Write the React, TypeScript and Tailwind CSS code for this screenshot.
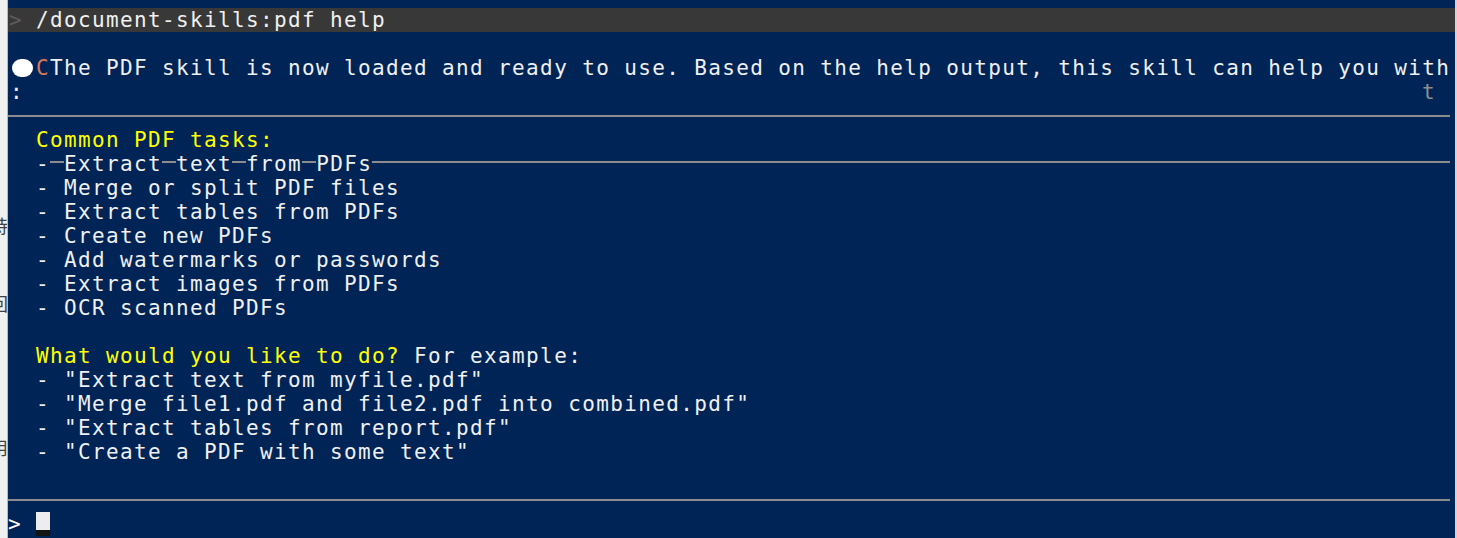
const mono = "font-['DejaVu_Sans_Mono','Liberation_Mono',monospace] text-[21px] tracking-[1.36px]";

const tasks = [
  'Merge or split PDF files',
  'Extract tables from PDFs',
  'Create new PDFs',
  'Add watermarks or passwords',
  'Extract images from PDFs',
  'OCR scanned PDFs',
];

const examples = [
  '"Extract text from myfile.pdf"',
  '"Merge file1.pdf and file2.pdf into combined.pdf"',
  '"Extract tables from report.pdf"',
  '"Create a PDF with some text"',
];

const Row = ({ children, className = '' }: { children?: React.ReactNode; className?: string }) => (
  <div className={`flex h-[24px] items-center whitespace-pre leading-[24px] ${className}`}>{children}</div>
);

const Rule = () => (
  <div className="flex h-[24px] items-center">
    <div className="h-[2px] w-[1442px] bg-[#8c8c8c]" />
  </div>
);

export default function App() {
  return (
    <div className="flex h-[538px] w-[1457px] overflow-hidden bg-[#f0f0f0]">
      {/* window behind, mostly covered */}
      <div className="w-[7px] overflow-hidden">
        <div className="-ml-[10px] flex w-[18px] flex-col font-['Noto_Sans_CJK_SC',sans-serif] text-[18px] leading-[22px] text-[#404040]">
          <span className="mt-[214px]">持</span>
          <span className="mt-[56px]">回</span>
          <span className="mt-[122px]">用</span>
        </div>
      </div>
      <div className="w-px bg-[#b9b9b9]" />

      <div className={`w-[1447px] bg-[#012456] pt-[8px] text-[#f0f0f0] ${mono}`}>
        <Row className="bg-[#383838]">
          <span className="w-[28px] pl-[1px] text-[#5c5c5c]">&gt;</span>
          <span>/document-skills:pdf help</span>
        </Row>
        <Row />
        <Row>
          <span className="flex w-[28px] items-center">
            <span className="ml-[4px] h-[18px] w-[21px] rounded-full bg-white" />
          </span>
          <span className="text-[#d9775a]">C</span>
          <span>The PDF skill is now loaded and ready to use. Based on the help output, this skill can help you with</span>
        </Row>
        <Row>
          <span className="w-[1414px] pl-[2px]">:</span>
          <span className="text-[#8f8f8f]">t</span>
        </Row>
        <Rule />
        <Row>
          <span className="pl-[28px] text-[#ffff00]">Common PDF tasks:</span>
        </Row>
        <Row className="relative">
          <div className="absolute top-[9px] left-[28px] h-[2px] w-[1414px] bg-[#8c8c8c]" />
          <span className="relative pl-[28px]">
            {'- Extract text from PDFs'.split(' ').map((w, i) => (
              <span key={i}>
                {i > 0 && ' '}
                <span className="bg-[#012456]">{w}</span>
              </span>
            ))}
          </span>
        </Row>
        {tasks.map((t) => (
          <Row key={t}>
            <span className="pl-[28px]">- {t}</span>
          </Row>
        ))}
        <Row />
        <Row>
          <span className="pl-[28px] text-[#ffff00]">What would you like to do?</span>
          <span> For example:</span>
        </Row>
        {examples.map((e) => (
          <Row key={e}>
            <span className="pl-[28px]">- {e}</span>
          </Row>
        ))}
        <Row />
        <Rule />
        <Row>
          <span className="w-[28px] text-white">&gt;</span>
          <span className="flex h-[24px] w-[14px] flex-col">
            <span className="h-[18px] bg-[#ededf0]" />
            <span className="h-[6px] bg-[#141414]" />
          </span>
        </Row>
      </div>

      <div className="w-[2px] bg-[#d2d2d2]" />
    </div>
  );
}
